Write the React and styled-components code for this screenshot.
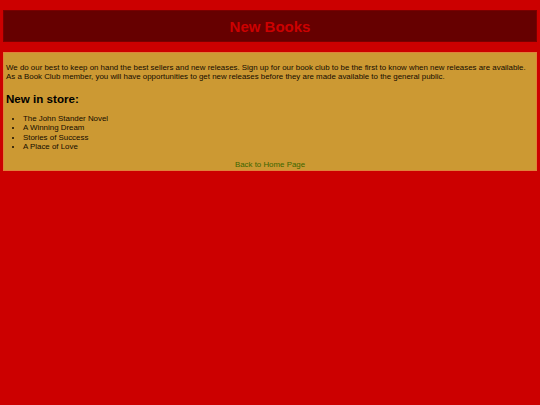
import React from "react";
import styled, { createGlobalStyle } from "styled-components";

const GlobalStyle = createGlobalStyle`
  html, body {
    margin: 0;
    padding: 0;
    background: #cc0000;
  }
  body {
    font-family: "Liberation Sans", Arial, sans-serif;
  }
`;

const books = [
  "The John Stander Novel",
  "A Winning Dream",
  "Stories of Success",
  "A Place of Love",
];

const App = () => {
  return (
    <Page>
      <GlobalStyle />
      <Header>
        <Title>New Books</Title>
      </Header>
      <Content>
        <Intro>
          We do our best to keep on hand the best sellers and new releases. Sign
          up for our book club to be the first to know when new releases are
          available.
          <br />
          As a Book Club member, you will have opportunities to get new releases
          before they are made available to the general public.
        </Intro>
        <SubTitle>New in store:</SubTitle>
        <BookList>
          {books.map((b) => (
            <li key={b}>{b}</li>
          ))}
        </BookList>
        <Footer>
          <HomeLink href="#">Back to Home Page</HomeLink>
        </Footer>
      </Content>
    </Page>
  );
};

//전체 래퍼
const Page = styled.div`
  display: flex;
  flex-direction: column;
  gap: 10px;
  padding: 10px 3px 0;
`;

//상단 제목
const Header = styled.header`
  display: flex;
  align-items: center;
  justify-content: center;
  height: 32px;
  box-sizing: border-box;
  background: #660000;
  border: 1px solid #7a0000;
`;

const Title = styled.h1`
  margin: 0;
  font-size: 15px;
  font-weight: 700;
  color: #cc0000;
`;

//본문 박스
const Content = styled.section`
  background: #cc9933;
  border: 1px solid #e0803a;
  padding: 10px 2px 1px;
  color: #140c00;
  font-size: 7.9px;
  line-height: 9.35px;
`;

const Intro = styled.p`
  margin: 0;
`;

const SubTitle = styled.h2`
  margin: 10px 0 9px;
  font-size: 11.6px;
  line-height: 13.3px;
  font-weight: 700;
  color: #000;
`;

const BookList = styled.ul`
  margin: 0;
  padding-left: 17px;
`;

const Footer = styled.div`
  margin-top: 8.5px;
  text-align: center;
`;

const HomeLink = styled.a`
  color: #3d6600;
  text-decoration: none;
`;

export default App;
